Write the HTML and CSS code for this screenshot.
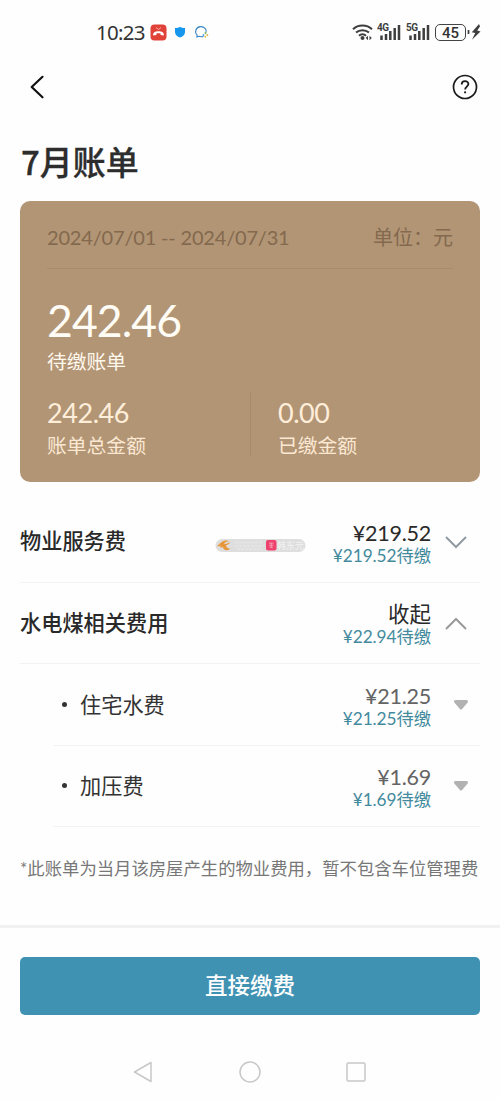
FILE: index.html
```html
<!DOCTYPE html>
<html lang="zh-CN">
<head>
<meta charset="utf-8">
<title>7月账单</title>
<link rel="stylesheet" href="styles.css">
</head>
<body>
<div class="status">
  <div class="status-left">
    <span class="clock">10:23</span>
    <svg class="ico-call" width="17" height="17" viewBox="0 0 17 17"><rect x=".5" y=".5" width="16" height="16" rx="4" fill="#e04238"/><path d="M3.2 11.6c-.5-3.2 2-4.4 5.3-4.4s5.8 1.200 5.300 4.400l-3.200-.6V9.500c-1.300-.5-2.900-.5-4.200 0V11z" fill="#fff"/><path d="M6 3.500l2.500 2 2.500-2" fill="none" stroke="#f6b5ae" stroke-width="1"/></svg>
    <svg class="ico-shield" width="12" height="12" viewBox="0 0 12 12"><path d="M6 .8C4.600 1.900 2.900 2 1 2v4c0 3 2.300 4.500 5 5.600C8.700 10.500 11 9 11 6V2C9.100 2 7.400 1.900 6 .8z" fill="#1697ee"/></svg>
    <svg class="ico-chat" width="15" height="14" viewBox="0 0 15 14"><path d="M9.500 11.200c-1.100.5-3 .6-4.200.1L2.800 12l.4-1.900C.2 7.500 1.600 2 6.600 1.600c3.900-.2 6.100 2.900 5.500 5.600" fill="none" stroke="#3b88c6" stroke-width="1.100"/><circle cx="11.500" cy="8" r="1" fill="#70b34b"/><circle cx="13.300" cy="10" r="1" fill="#edb34a"/><circle cx="11.300" cy="11.800" r="1" fill="#e9c34c"/><circle cx="9.500" cy="10" r=".9" fill="#4b9dd8"/></svg>
  </div>
  <div class="status-right">
    <svg width="21" height="18" viewBox="0 0 21 18"><g fill="none" stroke="#3e3e3e" stroke-width="2"><path d="M1 6.200c5.200-5 13.800-5 19 0"/><path d="M4 9.600c3.600-3.300 9.400-3.300 13 0"/><path d="M7 12.700c2-1.800 5-1.800 7 0"/></g><circle cx="10.500" cy="15" r="2" fill="#3e3e3e"/><path d="M16 12.800v4.400l-2.300-2.200zM17.500 12.800v4.400l2.300-2.200z" fill="#3e3e3e"/></svg>
    <svg class="signal" width="24" height="18" viewBox="0 0 24 18"><text x="0" y="8" class="net">4G</text><path d="M4.500 12.500V17M9 11V17M13.300 8V17M17.700 5V17M22 2V17" stroke="#3e3e3e" stroke-width="2.500"/></svg>
    <svg class="signal" width="24" height="18" viewBox="0 0 24 18"><text x="0" y="8" class="net">5G</text><path d="M4.500 12.500V17M9 11V17M13.300 8V17M17.700 5V17M22 2V17" stroke="#3e3e3e" stroke-width="2.500"/></svg>
    <span class="battery">45</span>
    <svg class="bolt" width="14" height="18" viewBox="0 0 14 18"><path d="M1.500 7v4" stroke="#3e3e3e" stroke-width="1.700"/><path d="M12 1L4.800 9.200l3.400.8-3.200 6.800L13.500 8.400l-3.300-.8 2.800-4z" fill="#3e3e3e"/></svg>
  </div>
</div>

<header class="nav">
  <svg width="16" height="24" viewBox="0 0 16 24"><path d="M13.500 1.800L2.700 12l10.800 10.300" fill="none" stroke="#111" stroke-width="2.200" stroke-linecap="round" stroke-linejoin="round"/></svg>
  <svg width="26" height="26" viewBox="0 0 26 26" fill="none" stroke="#1b1b1b"><circle cx="13" cy="13" r="11.500" stroke-width="1.700"/><path d="M9.700 10.400c0-4.400 6.700-4.300 6.700-.3 0 2.400-3.300 2.700-3.300 5.400" stroke-width="1.800"/><circle cx="13.100" cy="18.300" r="1.100" fill="#1b1b1b" stroke="none"/></svg>
</header>

<h1 class="title">7月账单</h1>

<section class="card">
  <div class="period"><span class="dates">2024/07/01 -- 2024/07/31</span><span class="unit">单位：元</span></div>
  <div class="due">242.46</div>
  <div class="due-label">待缴账单</div>
  <div class="totals">
    <div class="total"><div class="sum">242.46</div><div class="sum-label">账单总金额</div></div>
    <div class="total paid"><div class="sum">0.00</div><div class="sum-label">已缴金额</div></div>
  </div>
</section>

<main class="list">
  <div class="row">
    <span class="name">物业服务费</span>
    <svg class="tag" width="91" height="15" viewBox="0 0 91 15"><rect x=".5" y="1" width="90" height="13" rx="6.500" fill="#dedede"/><path d="M20 4.500h28M20 8h29M22 11h25" stroke="#e6e6e6" stroke-width="1.500" stroke-dasharray="3 1"/><path d="M2 8.200L6.500 4C8.500 2.300 11.500 1.800 14.500 3.200 12 3 10 4 9 5.800c2 .6 4-.6 6.500-1.500-1.500 2-3.600 2.700-4.500 3.200.3 2 2 3 4.500 3.300-2.800 2.400-7 1.700-7.700-1.800L5.500 10l.3-1.700z" fill="#e9973c"/><rect x="51" y="2" width="10.500" height="10.500" rx="2" fill="#ef416d"/><path d="M54 5.200h4.500M54 7.200h4.500M54.500 9.200h3.500M56.200 4.500v5.500" stroke="#f8a8bd" stroke-width=".8"/><text x="62" y="11" class="tag-text">韩东元</text></svg>
    <div class="amount"><div class="main">¥219.52</div><div class="wait">¥219.52<b>待缴</b></div></div>
    <svg class="chev" width="24" height="14" viewBox="0 0 24 14"><path d="M2 2l10 10L22 2" fill="none" stroke="#929ba2" stroke-width="2"/></svg>
  </div>
  <div class="row">
    <span class="name">水电煤相关费用</span>
    <div class="amount"><div class="main fold">收起</div><div class="wait">¥22.94<b>待缴</b></div></div>
    <svg class="chev" width="24" height="14" viewBox="0 0 24 14"><path d="M2 12L12 2l10 10" fill="none" stroke="#9a9a9a" stroke-width="2"/></svg>
  </div>
  <div class="row sub">
    <i class="dot"></i><span class="subname">住宅水费</span>
    <div class="amount"><div class="main grey">¥21.25</div><div class="wait">¥21.25<b>待缴</b></div></div>
    <svg class="tri" width="16" height="12" viewBox="0 0 16 12"><path d="M2.500 2.500h11L8 9z" fill="#b2b2b2" stroke="#b2b2b2" stroke-width="3" stroke-linejoin="round"/></svg>
  </div>
  <div class="row sub">
    <i class="dot"></i><span class="subname">加压费</span>
    <div class="amount"><div class="main grey">¥1.69</div><div class="wait">¥1.69<b>待缴</b></div></div>
    <svg class="tri" width="16" height="12" viewBox="0 0 16 12"><path d="M2.500 2.500h11L8 9z" fill="#b2b2b2" stroke="#b2b2b2" stroke-width="3" stroke-linejoin="round"/></svg>
  </div>
</main>

<p class="note">*此账单为当月该房屋产生的物业费用，暂不包含车位管理费</p>

<footer class="pay"><button class="pay-btn">直接缴费</button></footer>

<div class="sysnav">
  <svg width="20" height="22" viewBox="0 0 20 22"><path d="M18 1.500v19L1.500 11z" fill="none" stroke="#c8c8c8" stroke-width="1.500" stroke-linejoin="round"/></svg>
  <svg width="22" height="22" viewBox="0 0 22 22"><circle cx="11" cy="11" r="10" fill="none" stroke="#c8c8c8" stroke-width="1.500"/></svg>
  <svg width="20" height="20" viewBox="0 0 20 20"><rect x="1" y="1" width="18" height="18" rx="1" fill="none" stroke="#c8c8c8" stroke-width="1.500"/></svg>
</div>
</body>
</html>
```

FILE: styles.css
```css
* { box-sizing: border-box; }
body {
  margin: 0;
  width: 500px;
  height: 1100px;
  overflow: hidden;
  background: #fefefe;
  color: #2f2f2f;
  font-family: Lato, "Noto Sans CJK SC", sans-serif;
}
svg { display: block; flex: none; }

.status { display: flex; justify-content: space-between; height: 64px; padding: 0 19px 0 96px; }
.status-left, .status-right { display: flex; align-items: center; height: 64px; }
.clock { width: 49px; font: 20.500px/24px "Noto Sans", sans-serif; letter-spacing: -0.7px; color: #333; white-space: nowrap; }
.ico-call { margin-left: 5px; }
.ico-shield { margin-left: 7px; }
.ico-chat { margin-left: 8px; }
.signal { margin-left: 4px; }
.signal + .signal { margin-left: 5px; }
.net { font: bold 10px Roboto, sans-serif; letter-spacing: -0.5px; fill: #3e3e3e; }
.battery {
  width: 31px; height: 17px; margin-left: 5px;
  border: 1.500px solid #444; border-radius: 5px;
  font: 500 15px/16px Roboto, sans-serif; text-align: center; color: #333;
}
.bolt { margin-left: 1px; }

.nav { display: flex; justify-content: space-between; align-items: center; height: 46px; padding: 0 22px 0 29px; }
.title { margin: 29px 0 0 21px; height: 44px; font-size: 33px; line-height: 44px; font-weight: 500; color: #2d2d2d; font-family: "Noto Sans CJK SC", sans-serif; -webkit-text-stroke: 0.300px #2d2d2d; }

.card { height: 281px; margin: 18px 20px 0; padding: 19px 27px 0; border-radius: 10px; background: #b29575; }
.period { display: flex; justify-content: space-between; height: 49px; line-height: 35px; border-bottom: 1px solid #a98c6e; color: #83694e; }
.dates { font-size: 20px; letter-spacing: -0.180px; }
.unit { font-size: 20px; }
.due { height: 56px; margin-top: 23px; font-size: 44.500px; line-height: 56px; letter-spacing: -0.900px; color: #fffdf6; }
.due-label { height: 26px; font-size: 19.800px; line-height: 26px; color: #fff8ed; }
.totals { display: flex; height: 64px; margin-top: 18px; }
.total { width: 203.500px; }
.paid { border-left: 1px solid #a58a6d; padding-left: 27px; }
.sum { height: 41px; font-size: 27px; line-height: 41px; letter-spacing: -0.450px; color: #ffeeda; }
.sum-label { font-size: 19.800px; line-height: 24px; color: #fbe8d3; }

.list { padding: 19px 20px 0; }
.row { display: flex; align-items: center; height: 81.500px; border-bottom: 1.500px solid #f3f3f3; }
.name { font-size: 21.200px; font-weight: 500; line-height: 30px; color: #292929; white-space: nowrap; }
.tag { margin: 8px 0 0 89px; }
.tag-text { font-size: 9px; fill: #f2f2f2; }
.amount { margin-left: auto; padding-top: 5px; text-align: right; white-space: nowrap; }
.main { height: 24px; line-height: 24px; font-size: 21.500px; letter-spacing: -0.250px; color: #292929; }
.fold { letter-spacing: 0; }
.wait { height: 22px; line-height: 22px; font-size: 17.300px; letter-spacing: -0.060px; color: #438a9d; }
.wait b { font-weight: 400; }
.grey { color: #646464; }
.chev { margin: 2px 12px 0 13px; }
.sub { margin-left: 33px; }
.dot { width: 5px; height: 5px; margin: 0 13px 0 9px; border-radius: 50%; background: #333; }
.subname { margin-top: -2px; font-size: 21.200px; color: #333; }
.tri { margin: 1px 11px 0 22px; }

.note { margin: 28px 20px 0; height: 28px; line-height: 28px; font-size: 17.350px; color: #777; white-space: nowrap; }
.pay { margin-top: 42px; border-top: 3px solid #f1f1f1; padding: 29px 20px 0; }
.pay-btn { display: block; width: 100%; height: 58px; padding: 0 0 5px; border: 0; border-radius: 5px; background: #3f92b2; color: #fff; font: 500 22.500px/50px "Noto Sans CJK SC", sans-serif; }
.sysnav { display: flex; align-items: center; justify-content: space-between; height: 22px; margin: 46px 134px 0 133px; }
```
